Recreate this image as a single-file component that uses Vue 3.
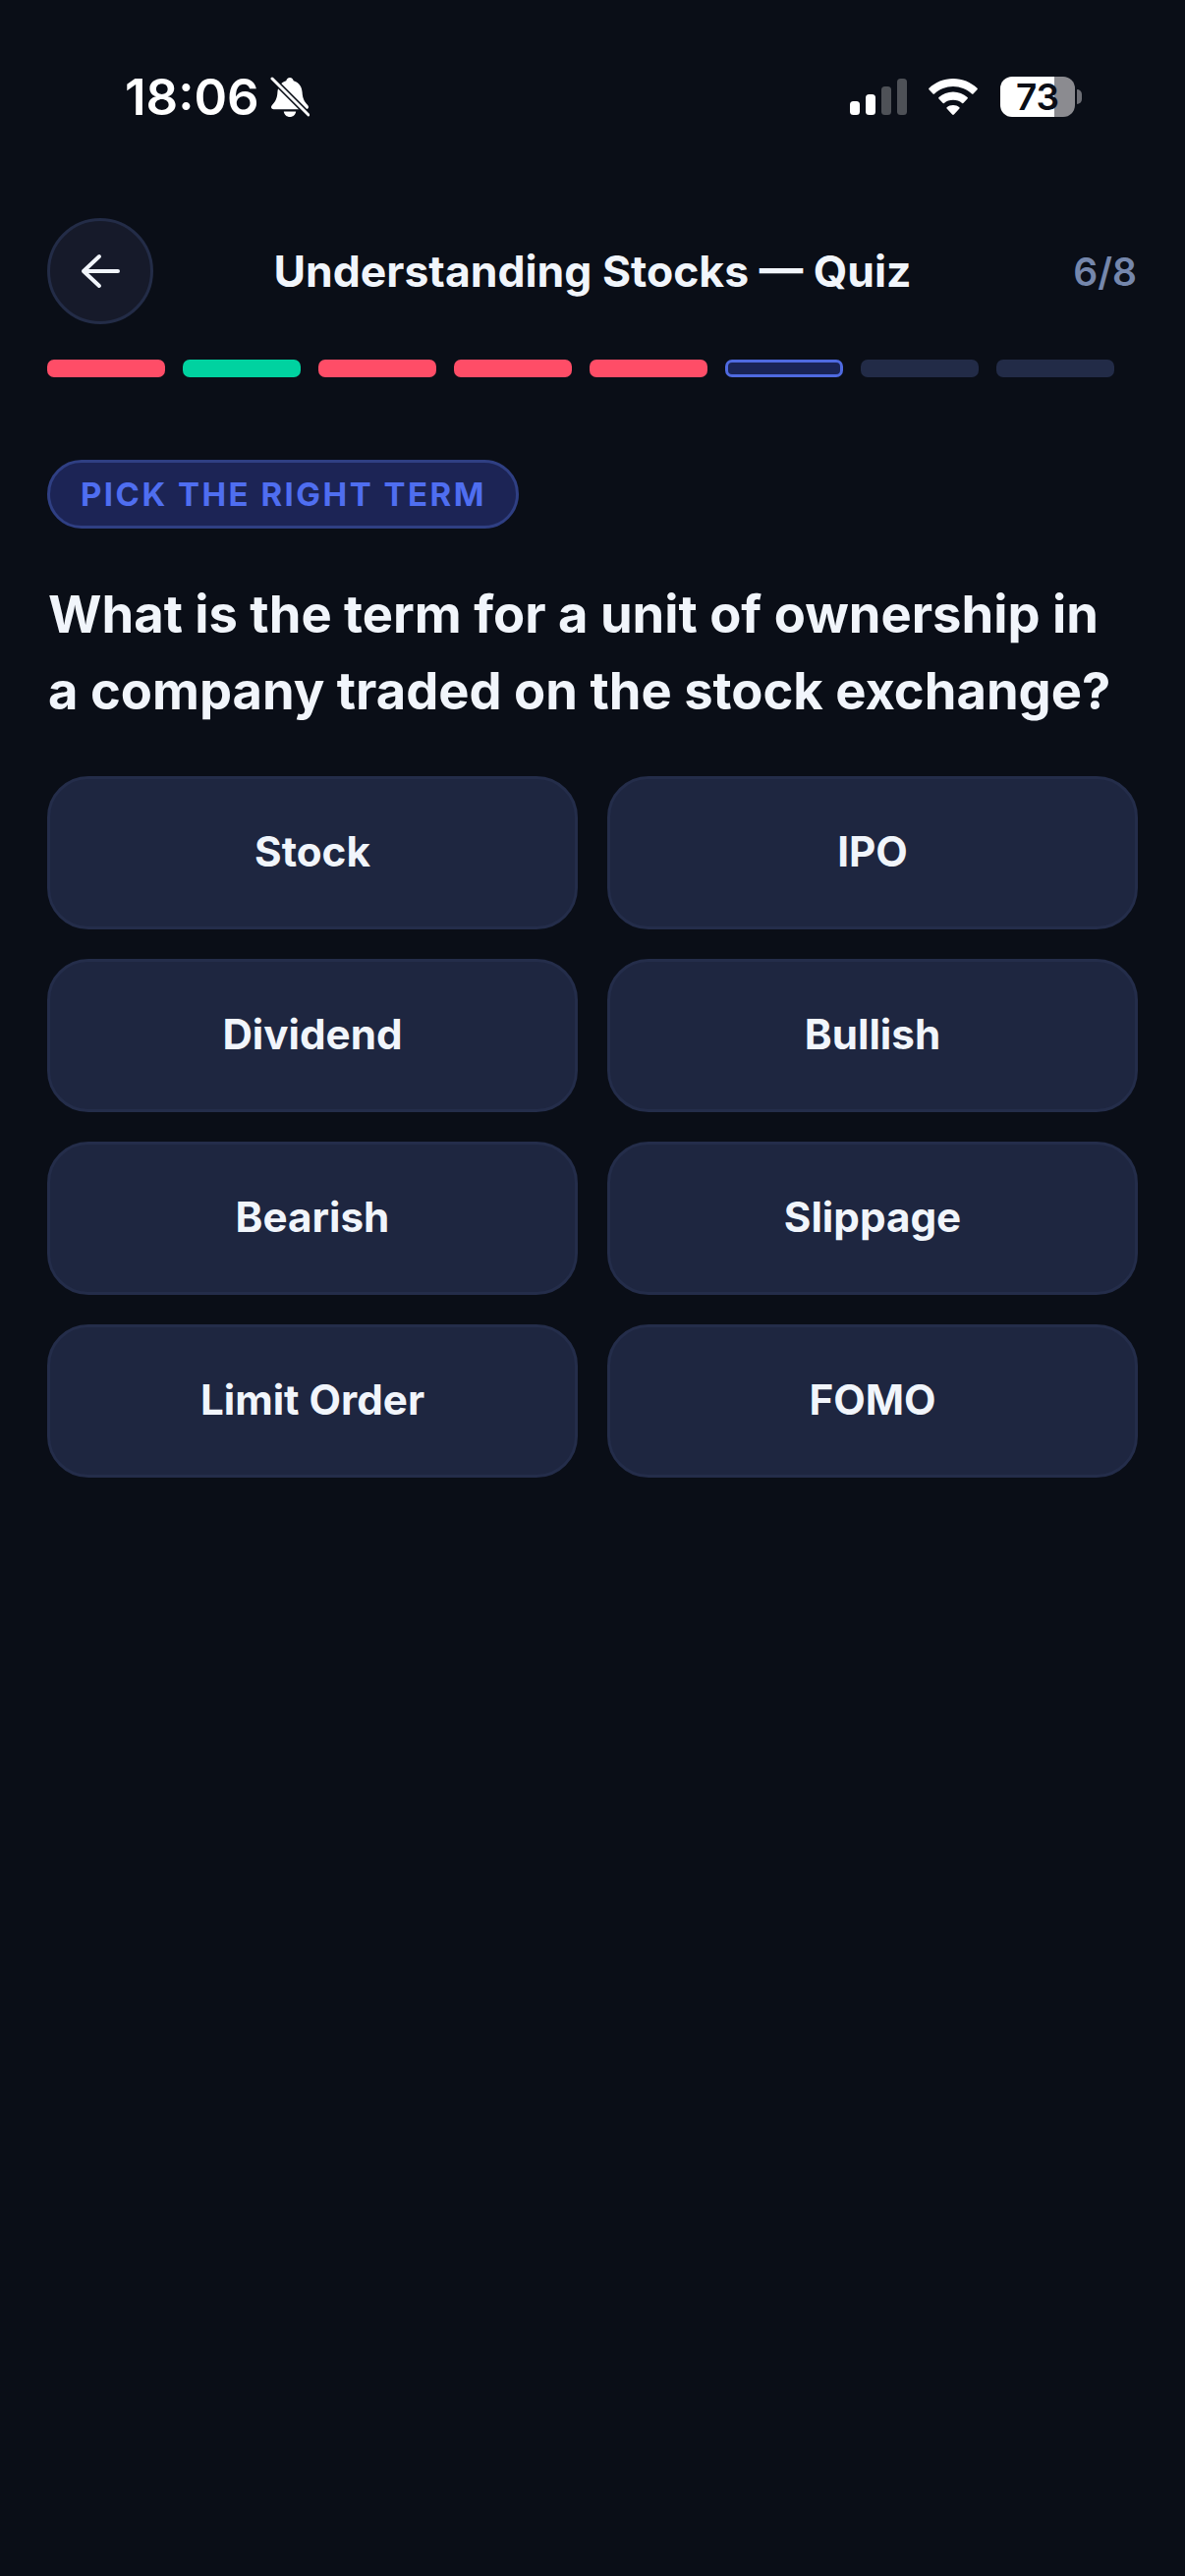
<script setup>
const bars = ['wrong', 'right', 'wrong', 'wrong', 'wrong', 'current', 'todo', 'todo']
const answers = ['Stock', 'IPO', 'Dividend', 'Bullish', 'Bearish', 'Slippage', 'Limit Order', 'FOMO']
</script>

<template>
  <div class="screen">
    <div class="status">
      <div class="status-left">
        <span class="time">18:06</span>
        <svg class="bell" width="40" height="42" viewBox="0 0 40 42">
          <path fill="#fff" d="M20 1c-2 0-3.400 1.300-3.700 3.200C10.500 5.800 7.800 10.500 7.400 16c-.3 4.800-1.200 8.500-5.500 13-1.700 1.800-.8 4.200 1.600 4.200h33c2.400 0 3.300-2.400 1.600-4.200-4.300-4.500-5.200-8.200-5.500-13-.4-5.500-3.100-10.200-8.900-11.800C23.400 2.300 22 1 20 1z"/>
          <path fill="#fff" d="M13.800 35.500h12.400c-.5 3.400-3 5.500-6.200 5.500s-5.700-2.100-6.200-5.500z"/>
          <path stroke="#0a0e17" stroke-width="6" d="M0 0 40 40"/>
          <path stroke="#fff" stroke-width="3" stroke-linecap="round" d="M2 2 39 39"/>
        </svg>
      </div>
      <div class="status-right">
        <svg width="58" height="37" viewBox="0 0 58 37">
          <rect x="0" y="23" width="10" height="14" rx="3.500" fill="#fff"/>
          <rect x="16" y="16" width="10" height="21" rx="3.500" fill="#fff"/>
          <rect x="32" y="8" width="10" height="29" rx="3.500" fill="#fff" opacity=".28"/>
          <rect x="48" y="0" width="10" height="37" rx="3.500" fill="#fff" opacity=".28"/>
        </svg>
        <svg class="wifi" width="50" height="37" viewBox="0 0 50 37">
          <path fill="#fff" d="M25 0c9.500 0 18 3.700 24.500 9.700.5.400.5 1 0 1.500l-4 4.300c-.4.400-1 .400-1.500 0C38.800 10.800 32.300 8 25 8S11.200 10.800 6 15.500c-.5.400-1.100.400-1.500 0l-4-4.300c-.5-.5-.5-1.100 0-1.500C7 3.700 15.500 0 25 0z"/>
          <path fill="#fff" d="M25 13.500c5.500 0 10.600 2.100 14.500 5.600.5.400.5 1 .1 1.500l-4 4.200c-.4.400-1 .5-1.500.1-2.400-2-5.500-3.200-9.100-3.200s-6.700 1.200-9.100 3.200c-.5.400-1.100.3-1.500-.1l-4-4.200c-.4-.5-.4-1.100.1-1.500 3.900-3.500 9-5.600 14.500-5.600z"/>
          <path fill="#fff" d="M25 27c2.500 0 4.700.8 6.300 2.200.5.400.5 1 .1 1.400l-5.500 5.900c-.5.500-1.300.5-1.800 0l-5.500-5.900c-.4-.4-.4-1 .1-1.400 1.600-1.400 3.800-2.200 6.300-2.200z"/>
        </svg>
        <div class="battery">
          <div class="cell">73</div>
          <div class="nub"></div>
        </div>
      </div>
    </div>

    <main class="content">
      <div class="top">
        <button class="back">
          <svg width="42" height="36" viewBox="0 0 42 36" fill="none" stroke="#f1f5fb" stroke-width="4" stroke-linecap="round" stroke-linejoin="round">
            <path d="M39 18H4M20 3 4 18l16 15"/>
          </svg>
        </button>
        <div class="title">Understanding Stocks — Quiz</div>
        <div class="count">6/8</div>
      </div>

      <div class="bars">
        <div v-for="(b, i) in bars" :key="i" class="bar" :class="b"></div>
      </div>

      <div class="badge">PICK THE RIGHT TERM</div>

      <h1 class="question">What is the term for a unit of ownership in<br>a company traded on the stock exchange?</h1>

      <div class="answers">
        <button v-for="a in answers" :key="a" class="answer">{{ a }}</button>
      </div>
    </main>
  </div>
</template>

<style>
html, body {
  margin: 0;
  background: #0a0e17;
}
</style>

<style scoped>
.screen {
  width: 1206px;
  height: 2622px;
  overflow: hidden;
  background: #0a0e17;
  color: #f1f5fb;
  font-family: Inter, "Liberation Sans", sans-serif;
}

.status {
  height: 222px;
  box-sizing: border-box;
  padding: 72px 105px 0 127px;
  display: flex;
  justify-content: space-between;
  align-items: flex-start;
}
.status-left {
  display: flex;
  align-items: center;
  gap: 11px;
}
.time {
  font-size: 51px;
  font-weight: 600;
  line-height: 54px;
  color: #fff;
}
.status-right {
  display: flex;
  align-items: center;
  gap: 22px;
  padding-top: 6px;
}
.wifi {
  margin-right: 1px;
}
.battery {
  display: flex;
  align-items: center;
  gap: 2px;
}
.cell {
  width: 76px;
  height: 41px;
  border-radius: 12px;
  background: linear-gradient(90deg, #fff 72%, #8b8b90 72%);
  color: #0a0e17;
  font-size: 37px;
  font-weight: 600;
  line-height: 41px;
  text-align: center;
}
.nub {
  width: 5px;
  height: 15px;
  border-radius: 0 6px 6px 0;
  background: #6d6e75;
}

.content {
  padding: 0 48px;
}
.top {
  display: grid;
  grid-template-columns: 108px 1fr 108px;
  align-items: center;
}
.back {
  width: 108px;
  height: 108px;
  box-sizing: border-box;
  padding: 0;
  border: 3px solid #232c47;
  border-radius: 50%;
  background: #161a2a;
  display: flex;
  align-items: center;
  justify-content: center;
}
.title {
  font-size: 44.500px;
  font-weight: 700;
  text-align: center;
}
.count {
  font-size: 39px;
  font-weight: 600;
  color: #7587ac;
  text-align: right;
  margin-right: 1px;
}

.bars {
  display: flex;
  gap: 18px;
  margin-top: 36px;
}
.bar {
  width: 120px;
  height: 18px;
  box-sizing: border-box;
  border-radius: 7px;
}
.wrong { background: #ff4d67; }
.right { background: #00d2a0; }
.todo { background: #222b47; }
.current {
  background: #1a2456;
  border: 3px solid #4f6ae0;
}

.badge {
  width: max-content;
  height: 70px;
  box-sizing: border-box;
  margin-top: 84px;
  padding: 0 30px 0 31px;
  border: 3px solid #2f3f83;
  border-radius: 35px;
  background: #1c2455;
  color: #4f6ef0;
  font-size: 33px;
  font-weight: 700;
  letter-spacing: 2.475px;
  line-height: 64px;
}

.question {
  margin: 48px 0 0;
  padding-left: 1px;
  font-size: 52.500px;
  font-weight: 700;
  line-height: 78px;
  color: #f1f5fb;
  white-space: nowrap;
}

.answers {
  display: grid;
  grid-template-columns: 1fr 1fr;
  gap: 30px;
  margin-top: 48px;
}
.answer {
  height: 156px;
  box-sizing: border-box;
  padding: 0 0 3px;
  border: 3px solid #242d4a;
  border-radius: 42px;
  background: #1e2640;
  color: #f1f5fb;
  font-family: inherit;
  font-size: 42.200px;
  font-weight: 700;
}
</style>
